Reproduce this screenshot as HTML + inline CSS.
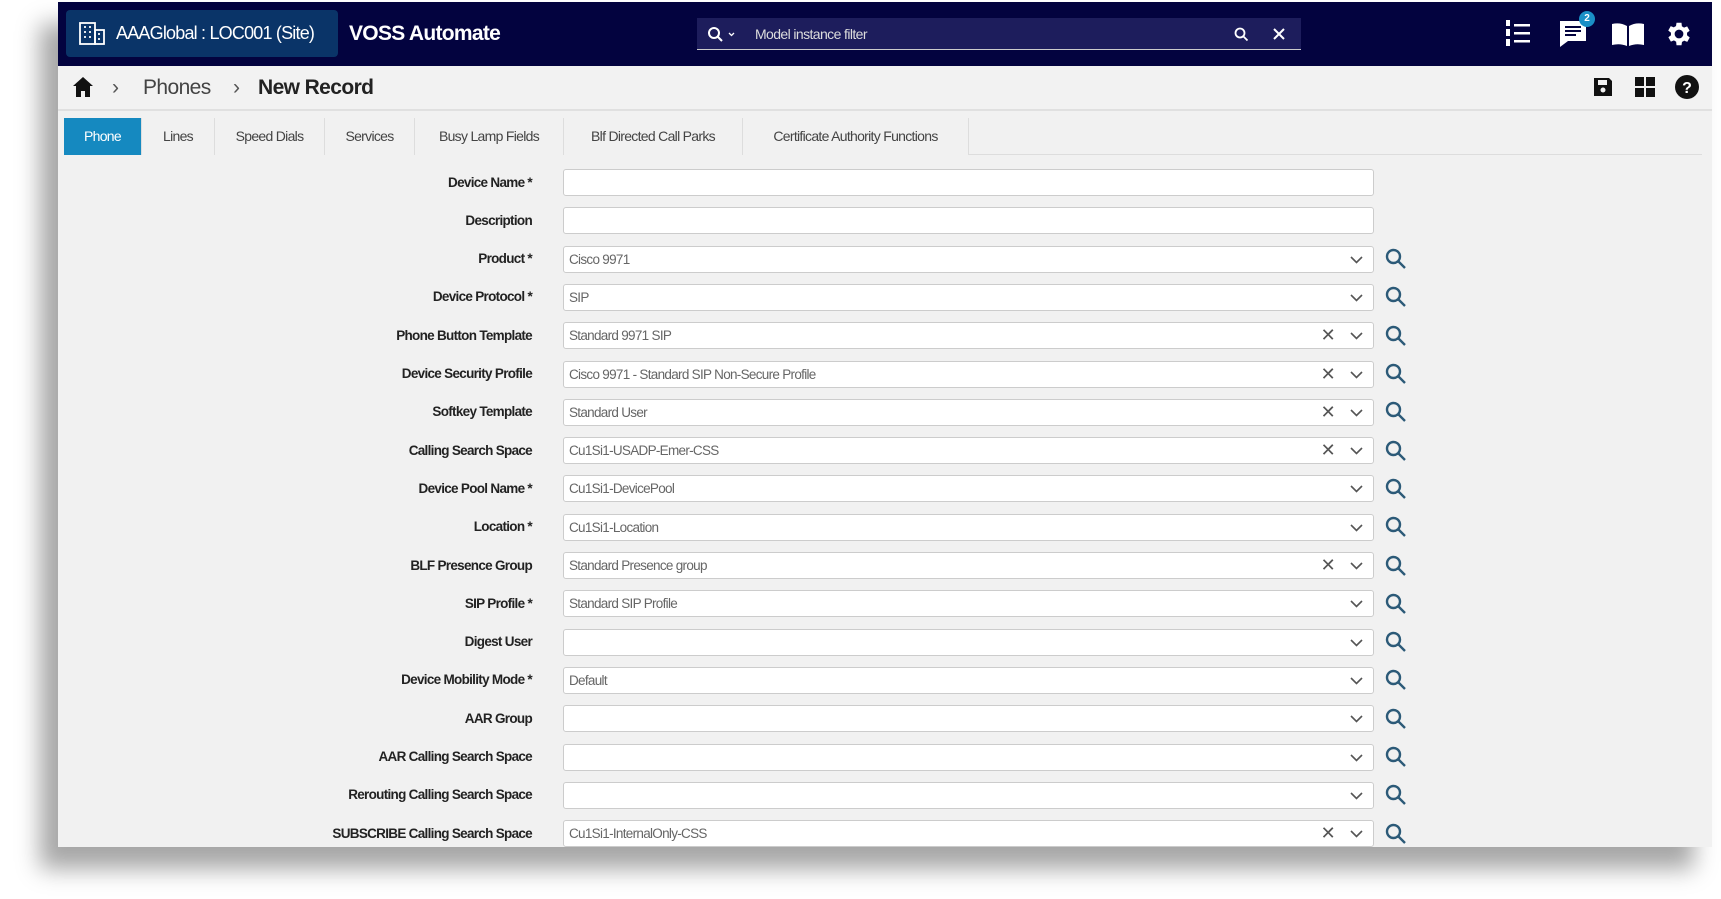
<!DOCTYPE html>
<html><head><meta charset="utf-8"><style>
*{box-sizing:border-box;margin:0;padding:0}
body{width:1721px;height:899px;background:#fff;font-family:"Liberation Sans",sans-serif;position:relative;overflow:hidden}
#frame{position:absolute;left:58px;top:2px;width:1654px;height:845px;background:#f1f1f1;box-shadow:-18px 22px 22px rgba(0,0,0,.35);overflow:hidden}
#hdr{position:absolute;left:0;top:0;width:100%;height:64px;background:#03033f}
#site{position:absolute;left:8px;top:8px;width:272px;height:47px;background:#0a3468;border-radius:4px;color:#fff;font-size:18px;letter-spacing:-.8px;line-height:47px;padding-left:50px}
#title{position:absolute;left:291px;top:20px;color:#fff;font-size:21px;font-weight:bold;letter-spacing:-.7px}
#srch{position:absolute;left:639px;top:16px;width:604px;height:32px;background:#1d1d5c;border-bottom:1px solid #ccc;color:#ddd;font-size:14px;letter-spacing:-.6px;line-height:32px;padding-left:58px}
#bc{position:absolute;left:0;top:64px;width:100%;height:45px;background:#f2f2f2;border-bottom:2px solid #e0e0e0}
#bc .t{position:absolute;top:10px;font-size:21px;letter-spacing:-.6px}
#tabs{position:absolute;left:6px;top:116px;height:37px;right:10px;border-bottom:1px solid #ddd}
.tab{position:absolute;top:0;height:37px;line-height:37px;text-align:center;font-size:14px;color:#444;letter-spacing:-.7px;border-right:1px solid #ddd;background:#f1f1f1}
.tab.a{background:#1589c0;color:#fff}
.lbl{position:absolute;right:1180px;font-size:13.5px;font-weight:bold;color:#222;letter-spacing:-.7px;text-align:right;white-space:nowrap}
.inp{position:absolute;left:505px;width:811px;height:27px;background:#fff;border:1px solid #ccc;border-radius:3px;font-size:13.5px;color:#666;letter-spacing:-.7px;line-height:25px;padding-left:5px}
.inp .x{position:absolute;right:38px;top:0;color:#555;font-size:18px}
.inp svg{position:absolute;right:10px;top:9px}
.mg{position:absolute;left:1326px}
</style></head><body>
<div id="frame">
 <div id="hdr">
  <div id="site"><svg style="position:absolute;left:13px;top:12px" width="26" height="23" viewBox="0 0 26 23" fill="none" stroke="#fff" stroke-width="1.8"><rect x="1" y="1" width="15" height="21"/><rect x="16" y="8" width="9" height="14"/><path d="M5 5h2M10 5h2M5 10h2M10 10h2M5 15h2M10 15h2M19 12h2M19 17h2"/></svg>AAAGlobal : LOC001 (Site)</div>
  <div id="title">VOSS Automate</div>
  <div id="srch"><svg style="position:absolute;left:10px;top:8px" width="30" height="16" viewBox="0 0 30 16" fill="none" stroke="#fff" stroke-width="2"><circle cx="7" cy="7" r="5"/><path d="M11 11l4 4"/><path d="M22 7l2.5 2.5L27 7" stroke-width="1.3"/></svg>Model instance filter
   <svg style="position:absolute;right:52px;top:9px" width="15" height="15" viewBox="0 0 15 15" fill="none" stroke="#fff" stroke-width="1.8"><circle cx="6" cy="6" r="4.5"/><path d="M9.5 9.5l4 4"/></svg>
   <svg style="position:absolute;right:16px;top:10px" width="12" height="12" viewBox="0 0 12 12" stroke="#fff" stroke-width="2"><path d="M1 1l10 10M11 1L1 11"/></svg></div>
  <svg style="position:absolute;left:1446px;top:16px" width="28" height="30" viewBox="0 0 28 30" fill="#fff"><rect x="10" y="6" width="16" height="2.5"/><rect x="10" y="14" width="16" height="2.5"/><rect x="10" y="22" width="16" height="2.5"/><rect x="2" y="2" width="4" height="6"/><rect x="2" y="11" width="4" height="7"/><rect x="2" y="21" width="4" height="7"/></svg>
  <svg style="position:absolute;left:1500px;top:17px" width="32" height="30" viewBox="0 0 32 30"><path d="M2 2h26v20H10l-8 6z" fill="#fff"/><path d="M7 8h16M7 12h16M7 16h11" stroke="#03033f" stroke-width="2"/></svg>
  <div style="position:absolute;left:1521px;top:9px;width:16px;height:16px;border-radius:50%;background:#1a8fc6;color:#fff;font-size:10px;font-weight:bold;text-align:center;line-height:16px">2</div>
  <svg style="position:absolute;left:1553px;top:20px" width="34" height="24" viewBox="0 0 34 24" fill="#fff"><path d="M1 2q8-2 15 2v20q-7-3-15-1z"/><path d="M33 2q-8-2-15 2v20q7-3 15-1z"/></svg>
  <svg style="position:absolute;left:1606px;top:17px" width="30" height="30" viewBox="0 0 24 24" fill="#fff"><path d="M19.4 13a7.5 7.5 0 000-2l2.1-1.6-2-3.5-2.5 1a7 7 0 00-1.7-1L15 3h-4l-.4 2.7a7 7 0 00-1.7 1l-2.5-1-2 3.5L6.6 11a7.5 7.5 0 000 2l-2.1 1.6 2 3.5 2.5-1a7 7 0 001.7 1L11 21h4l.4-2.7a7 7 0 001.7-1l2.5 1 2-3.5zM13 15.5a3.5 3.5 0 110-7 3.5 3.5 0 010 7z" transform="translate(-1 0)"/></svg>
 </div>
 <div id="bc">
  <svg style="position:absolute;left:14px;top:10px" width="22" height="22" viewBox="0 0 22 22"><path d="M11 1L1 10h3v11h5v-6h4v6h5V10h3z" fill="#111"/></svg>
  <span class="t" style="left:54px;color:#555">&#x203A;</span>
  <span class="t" style="left:85px;color:#444">Phones</span>
  <span class="t" style="left:175px;color:#555">&#x203A;</span>
  <span class="t" style="left:200px;color:#222;font-weight:bold">New Record</span>
  <svg style="position:absolute;left:1534px;top:10px" width="22" height="22" viewBox="0 0 22 22"><path d="M2 2h15l3 3v15H2z" fill="#111"/><rect x="6" y="4" width="9" height="5" fill="#f2f2f2"/><circle cx="11" cy="14" r="2.5" fill="#f2f2f2"/></svg>
  <svg style="position:absolute;left:1576px;top:10px" width="22" height="22" viewBox="0 0 22 22" fill="#111"><rect x="1" y="1" width="9" height="9"/><rect x="12" y="1" width="9" height="9"/><rect x="1" y="12" width="9" height="9"/><rect x="12" y="12" width="9" height="9"/></svg>
  <svg style="position:absolute;left:1617px;top:9px" width="24" height="24" viewBox="0 0 24 24"><circle cx="12" cy="12" r="12" fill="#111"/><text x="12" y="18" text-anchor="middle" font-family="Liberation Sans" font-weight="bold" font-size="16" fill="#fff">?</text></svg>
 </div>
 <div id="tabs">
  <div class="tab a" style="left:0;width:78px">Phone</div>
  <div class="tab" style="left:78px;width:73px">Lines</div>
  <div class="tab" style="left:151px;width:110px">Speed Dials</div>
  <div class="tab" style="left:261px;width:90px">Services</div>
  <div class="tab" style="left:351px;width:149px">Busy Lamp Fields</div>
  <div class="tab" style="left:500px;width:179px">Blf Directed Call Parks</div>
  <div class="tab" style="left:679px;width:226px">Certificate Authority Functions</div>
 </div>
 <div id="rows"></div>
</div>
<script>
var R=[["Device Name *","",0,0],["Description","",0,0],["Product *","Cisco 9971",0,1],["Device Protocol *","SIP",0,1],["Phone Button Template","Standard 9971 SIP",1,1],["Device Security Profile","Cisco 9971 - Standard SIP Non-Secure Profile",1,1],["Softkey Template","Standard User",1,1],["Calling Search Space","Cu1Si1-USADP-Emer-CSS",1,1],["Device Pool Name *","Cu1Si1-DevicePool",0,1],["Location *","Cu1Si1-Location",0,1],["BLF Presence Group","Standard Presence group",1,1],["SIP Profile *","Standard SIP Profile",0,1],["Digest User","",0,1],["Device Mobility Mode *","Default",0,1],["AAR Group","",0,1],["AAR Calling Search Space","",0,1],["Rerouting Calling Search Space","",0,1],["SUBSCRIBE Calling Search Space","Cu1Si1-InternalOnly-CSS",1,1]];
var h="";
R.forEach(function(r,i){var c=180+i*38.3+0.5;
h+='<div class="lbl" style="top:'+(c-8)+'px">'+r[0]+'</div>';
h+='<div class="inp" style="top:'+(c-13.5)+'px">'+r[1]+(r[2]?'<span class="x">&#x2715;</span>':'')+(r[3]?'<svg width="13" height="8" viewBox="0 0 13 8" fill="none" stroke="#555" stroke-width="1.6"><path d="M1 1l5.5 5.5L12 1"/></svg>':'')+'</div>';
if(r[3])h+='<svg class="mg" style="top:'+(c-12)+'px" width="24" height="24" viewBox="0 0 24 24" fill="none" stroke="#2c5a78" stroke-width="2.4"><circle cx="9.5" cy="9.5" r="6.5"/><path d="M14 14l7 7"/></svg>';});
document.getElementById("rows").innerHTML=h;
</script>
</body></html>
